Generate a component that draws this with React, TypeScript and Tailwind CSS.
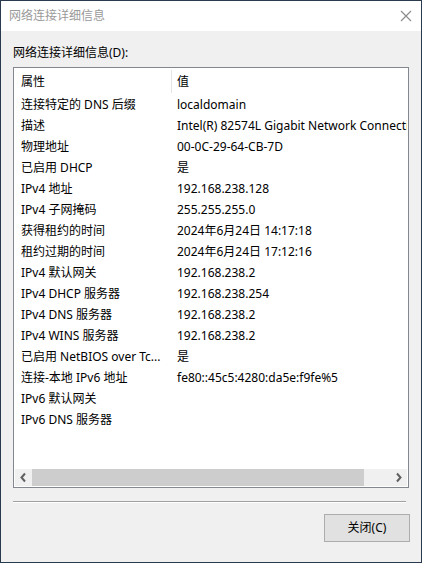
import React from "react";

const rows: [string, string][] = [
  ["连接特定的 DNS 后缀", "localdomain"],
  ["描述", "Intel(R) 82574L Gigabit Network Connection"],
  ["物理地址", "00-0C-29-64-CB-7D"],
  ["已启用 DHCP", "是"],
  ["IPv4 地址", "192.168.238.128"],
  ["IPv4 子网掩码", "255.255.255.0"],
  ["获得租约的时间", "2024年6月24日 14:17:18"],
  ["租约过期的时间", "2024年6月24日 17:12:16"],
  ["IPv4 默认网关", "192.168.238.2"],
  ["IPv4 DHCP 服务器", "192.168.238.254"],
  ["IPv4 DNS 服务器", "192.168.238.2"],
  ["IPv4 WINS 服务器", "192.168.238.2"],
  ["已启用 NetBIOS over Tc...", "是"],
  ["连接-本地 IPv6 地址", "fe80::45c5:4280:da5e:f9fe%5"],
  ["IPv6 默认网关", ""],
  ["IPv6 DNS 服务器", ""],
];

export default function App() {
  return (
    <div className="w-[422px] h-[563px] border border-[#2b3b4e] bg-[#f0f0f0] flex flex-col text-[12px] text-black font-['Noto_Sans','Noto_Sans_CJK_SC',sans-serif] overflow-hidden">
      {/* Title bar */}
      <div className="h-[30px] bg-white flex items-center justify-between pl-[8px] pr-[8px] shrink-0">
        <span className="text-[#9a9a9a] leading-[16px]">网络连接详细信息</span>
        <svg width="12" height="12" viewBox="0 0 12 12" className="mr-[1px]">
          <path d="M1 1 L11 11 M11 1 L1 11" stroke="#8a8a8a" strokeWidth="1.1" fill="none" />
        </svg>
      </div>
      {/* Body */}
      <div className="flex-1 flex flex-col pl-[12px]">
        <div className="mt-[14px] h-[16px] leading-[16px]">网络连接详细信息(D):</div>
        <div className="mt-[6px] w-[396px] h-[421px] border border-[#828790] bg-white p-px flex flex-col">
          {/* header */}
          <div className="h-[25px] flex items-center shrink-0">
            <div className="w-[156px] pl-[6px] leading-[16px]">属性</div>
            <div className="w-px h-[23px] bg-[#e5e5e5]" />
            <div className="pl-[5px] leading-[16px]">值</div>
          </div>
          <div className="flex-1 overflow-hidden">
            {rows.map(([k, v], i) => (
              <div key={i} className="h-[21px] flex items-center whitespace-nowrap">
                <div className="w-[157px] shrink-0 pl-[6px] pr-[4px] overflow-hidden text-ellipsis leading-[16px]">{k}</div>
                <div className="pl-[5px] leading-[16px]">{v}</div>
              </div>
            ))}
          </div>
          {/* horizontal scrollbar */}
          <div className="h-[17px] flex bg-[#f0f0f0] shrink-0">
            <div className="w-[17px] h-[17px] flex items-center justify-center">
              <svg width="17" height="17" viewBox="0 0 17 17">
                <path d="M10 4.5 L6.5 8.5 L10 12.5" stroke="#606060" strokeWidth="2" fill="none" />
              </svg>
            </div>
            <div className="flex-1 flex items-center">
              <div className="w-[332px] h-[17px] bg-[#cdcdcd]" />
            </div>
            <div className="w-[17px] h-[17px] flex items-center justify-center">
              <svg width="17" height="17" viewBox="0 0 17 17">
                <path d="M7 4.5 L10.5 8.5 L7 12.5" stroke="#606060" strokeWidth="2" fill="none" />
              </svg>
            </div>
          </div>
        </div>
        {/* separator */}
        <div className="mt-[13px] w-[393px] h-px bg-[#a0a0a0]" />
        <div className="w-[393px] h-px bg-white" />
        {/* button */}
        <div className="mt-[11px] ml-[311px] w-[86px] h-[28px] border border-[#adadad] bg-[#e1e1e1] flex items-center justify-center leading-[16px]">
          关闭(C)
        </div>
      </div>
    </div>
  );
}
